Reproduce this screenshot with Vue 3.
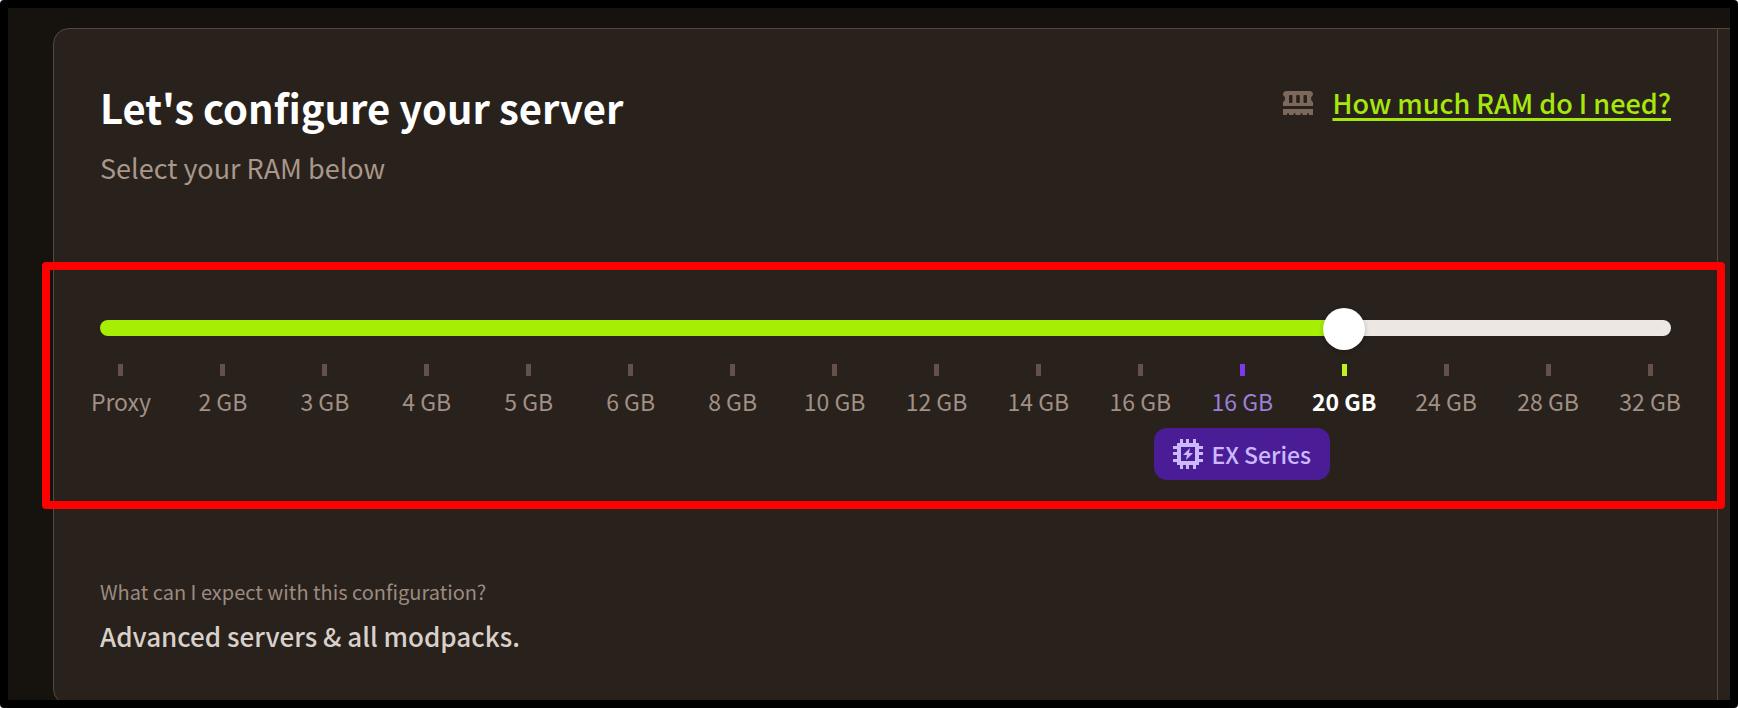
<script setup>
import { computed, ref } from 'vue'

const options = [
  { label: 'Proxy' },
  { label: '2 GB' },
  { label: '3 GB' },
  { label: '4 GB' },
  { label: '5 GB' },
  { label: '6 GB' },
  { label: '8 GB' },
  { label: '10 GB' },
  { label: '12 GB' },
  { label: '14 GB' },
  { label: '16 GB' },
  { label: '16 GB', series: 'EX Series' },
  { label: '20 GB' },
  { label: '24 GB' },
  { label: '28 GB' },
  { label: '32 GB' },
]

const selected = ref(12)
const fill = computed(() => `${(Number(selected.value) / (options.length - 1)) * 100}%`)
</script>

<template>
  <div class="frame">
    <main class="card">
      <header class="head">
        <div>
          <h1 class="title">Let's configure your server</h1>
          <label class="subtitle" for="ram">Select your RAM below</label>
        </div>
        <div class="help">
          <svg class="ram-icon" viewBox="0 0 32 24" aria-hidden="true">
            <path
              fill-rule="evenodd"
              d="M4.500 0H27.500Q31 0 31 4Q29 5 29 7.500Q29 10 31 11V15H1V11Q3 10 3 7.500Q3 5 1 4Q1 0 4.500 0ZM7 5V11Q7 12 8 12H9.500Q10.500 12 10.500 11V5Q10.500 4 9.500 4H8Q7 4 7 5ZM14.200 5V11Q14.200 12 15.200 12H16.800Q17.800 12 17.800 11V5Q17.800 4 16.800 4H15.200Q14.200 4 14.200 5ZM21.500 5V11Q21.500 12 22.500 12H24Q25 12 25 11V5Q25 4 24 4H22.500Q21.500 4 21.500 5Z"
            />
            <path
              d="M1 18H31V24H27V23Q26 21 25 23V24H20.500V23Q19.500 21 18.500 23V24H13.500V23Q12.500 21 11.500 23V24H7V23Q6 21 5 23V24H1Z"
            />
          </svg>
          <a class="link" href="#ram-guide">How much RAM do I need?</a>
        </div>
      </header>

      <section class="picker">
        <input
          id="ram"
          v-model="selected"
          class="range"
          type="range"
          min="0"
          :max="options.length - 1"
          step="1"
          :style="{ '--fill': fill }"
        />
        <ol class="ticks">
          <li
            v-for="(option, index) in options"
            :key="index"
            class="tick"
            :class="{ active: index === Number(selected), extra: option.series }"
          >
            <span class="mark"></span>
            <span class="size">{{ option.label }}</span>
            <span v-if="option.series" class="badge">
              <svg class="chip-icon" viewBox="0 0 30 30" aria-hidden="true">
                <path
                  fill-rule="evenodd"
                  d="M7 0H10V4H13V0H16V4H20V0H23V4H26V7H30V10H26V13H30V16H26V20H30V23H26V26H23V30H20V26H16V30H13V26H10V30H7V26H4V23H0V20H4V16H0V13H4V10H0V7H4V4H7ZM8 8V22H22V8Z"
                />
                <path d="M17 9L10 16H14L13 21L20 14H16Z" />
              </svg>
              {{ option.series }}
            </span>
          </li>
        </ol>
      </section>

      <section class="summary">
        <h2 class="question">What can I expect with this configuration?</h2>
        <p class="answer">Advanced servers &amp; all modpacks.</p>
      </section>
    </main>
    <aside class="next"></aside>
  </div>
</template>

<style>
body {
  background: #fff;
}
</style>

<style scoped>
.frame {
  box-sizing: border-box;
  display: flex;
  height: 100vh;
  padding: 20px 0 0 45px;
  border: 8px solid #000;
  border-radius: 4px;
  overflow: hidden;
  background: #16120e;
  color: #fff;
  font-family: "Noto Sans CJK SC", "Noto Sans", sans-serif;
}

.card {
  box-sizing: border-box;
  flex: 1;
  align-self: flex-start;
  min-width: 0;
  padding: 54px 46px 48px;
  border: 1px solid #57473e;
  border-radius: 16px 0 0 16px;
  background: #29211b;
}

.next {
  flex: 0 0 12px;
  border-top: 1px solid #57473e;
  background: #29211b;
}

.head {
  display: flex;
  justify-content: space-between;
}

.title {
  margin: 0;
  font-size: 40px;
  font-weight: 700;
  line-height: 48px;
}

.subtitle {
  display: block;
  margin-top: 17px;
  color: #a8978a;
  font-size: 27px;
  line-height: 40px;
}

.help {
  display: flex;
  align-items: center;
  gap: 18px;
  height: 40px;
}

.ram-icon {
  width: 32px;
  height: 24px;
  fill: #7d695c;
}

.link {
  color: #a6e80c;
  font-size: 27px;
  font-weight: 500;
  line-height: 40px;
  text-decoration-thickness: 3px;
  text-underline-offset: 4px;
}

.picker {
  position: relative;
  margin: 74px -54px 0 -58px;
  padding: 37px 46px 21px 50px;
  border: 8px solid #fe0000;
  border-radius: 4px;
}

.range {
  display: block;
  width: 100%;
  height: 42px;
  margin: 0;
  appearance: none;
  background: transparent;
}

.range::-webkit-slider-runnable-track {
  height: 16px;
  border-radius: 8px;
  background: linear-gradient(to right, #a6ee03 var(--fill), #ece7e3 var(--fill));
}

.range::-webkit-slider-thumb {
  width: 42px;
  height: 42px;
  margin-top: -12px;
  border-radius: 50%;
  appearance: none;
  background: #fff;
  box-shadow: 0 1px 4px rgb(0 0 0 / 25%);
}

.ticks {
  display: grid;
  grid-template-columns: repeat(16, minmax(0, 1fr));
  margin: 15px -30px 0;
  padding: 0;
  list-style: none;
}

.tick {
  display: flex;
  flex-direction: column;
  align-items: center;
  color: #a09085;
  font-size: 23px;
  line-height: 32px;
  white-space: nowrap;
}

.mark {
  width: 5px;
  height: 12px;
  margin-bottom: 9px;
  background: #64524a;
}

.extra {
  color: #9b7fdb;
}

.extra .mark {
  background: #7c3aed;
}

.active {
  color: #fff;
  font-weight: 700;
}

.active .mark {
  background: #bef31c;
}

.badge {
  display: flex;
  align-items: center;
  gap: 8px;
  height: 52px;
  margin-top: 11px;
  padding: 0 19px;
  border-radius: 13px;
  background: #4a1d96;
  color: #cbb8fd;
  font-weight: 500;
}

.chip-icon {
  width: 30px;
  height: 30px;
  fill: #cbb8fd;
}

.summary {
  margin-top: 67px;
}

.question {
  margin: 0;
  color: #9b8b80;
  font-size: 20px;
  font-weight: 400;
  line-height: 32px;
}

.answer {
  margin: 8px 0 0;
  color: #d8d0ca;
  font-size: 26px;
  font-weight: 500;
  line-height: 40px;
}
</style>
